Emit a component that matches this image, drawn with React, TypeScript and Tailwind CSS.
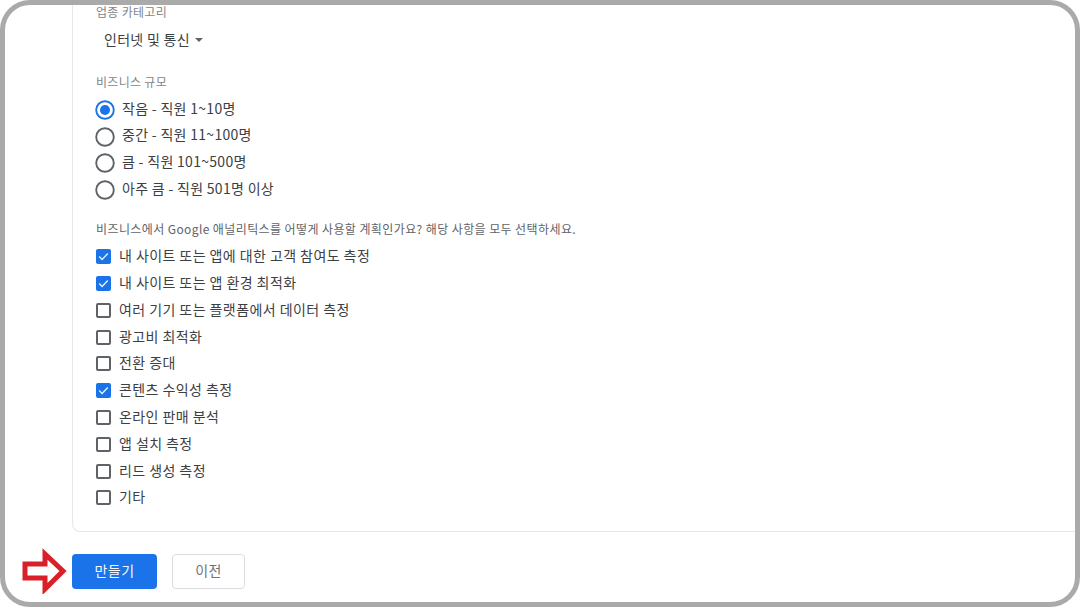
const font = { fontFamily: '"Noto Sans CJK KR", Roboto, sans-serif' };

const sizes = [
  "작음 - 직원 1~10명",
  "중간 - 직원 11~100명",
  "큼 - 직원 101~500명",
  "아주 큼 - 직원 501명 이상",
];

const goals = [
  { label: "내 사이트 또는 앱에 대한 고객 참여도 측정", checked: true },
  { label: "내 사이트 또는 앱 환경 최적화", checked: true },
  { label: "여러 기기 또는 플랫폼에서 데이터 측정", checked: false },
  { label: "광고비 최적화", checked: false },
  { label: "전환 증대", checked: false },
  { label: "콘텐츠 수익성 측정", checked: true },
  { label: "온라인 판매 분석", checked: false },
  { label: "앱 설치 측정", checked: false },
  { label: "리드 생성 측정", checked: false },
  { label: "기타", checked: false },
];

function Radio({ on }: { on: boolean }) {
  return (
    <svg width="20" height="20" viewBox="0 0 20 20" className="shrink-0">
      <circle cx="10" cy="10" r="8.8" fill="none" stroke={on ? "#1a73e8" : "#5f6368"} strokeWidth="1.9" />
      {on && <circle cx="10" cy="10" r="5" fill="#1a73e8" />}
    </svg>
  );
}

function Check({ on }: { on: boolean }) {
  if (!on) {
    return <div className="w-[15px] h-[15px] shrink-0 rounded-[2px] border-2 border-[#5f6368]" />;
  }
  return (
    <svg width="15" height="15" viewBox="0 0 15 15" className="shrink-0">
      <rect width="15" height="15" rx="2" fill="#1a73e8" />
      <path d="M3.2 7.6 L6.1 10.5 L11.8 4.6" fill="none" stroke="#e8f1fd" strokeWidth="1.4" />
    </svg>
  );
}

export default function App() {
  return (
    <div className="w-[1080px] h-[607px] bg-white" style={font}>
      <div className="relative w-full h-full border-[5px] border-[#aaaaaa] rounded-[30px] overflow-hidden flex flex-col">
        <div className="ml-[67px] h-[527px] shrink-0 border-l border-b border-[#e6e7e9] rounded-bl-lg pl-[23px]">
          <div className="mt-[-1px] text-[12px] leading-[16px] tracking-[.3px] text-[#80868b]">업종 카테고리</div>
          <div className="mt-[7px] pl-[8px] h-[24px] flex items-center gap-[5px] text-[14px] tracking-[.3px] text-[#3c4043]">
            인터넷 및 통신
            <span className="w-0 h-0 border-x-[4px] border-x-transparent border-t-[4px] border-t-[#5f6368] mt-[2px]" />
          </div>
          <div className="mt-[23px] text-[12px] leading-[16px] tracking-[.3px] text-[#80868b]">비즈니스 규모</div>
          <div className="mt-[7px] flex flex-col">
            {sizes.map((s, i) => (
              <div key={s} className="h-[26.6px] flex items-center gap-[7px] -ml-[1px] text-[14px] tracking-[.3px] text-[#3c4043]">
                <Radio on={i === 0} />
                <span className="-mt-[4px]">{s}</span>
              </div>
            ))}
          </div>
          <div className="mt-[18px] text-[12px] leading-[16px] tracking-[.4px] text-[#5f6368]">
            비즈니스에서 Google 애널리틱스를 어떻게 사용할 계획인가요? 해당 사항을 모두 선택하세요.
          </div>
          <div className="mt-[6px] flex flex-col">
            {goals.map((g) => (
              <div key={g.label} className="h-[26.8px] flex items-center gap-[8px] text-[14px] tracking-[.43px] text-[#3c4043]">
                <Check on={g.checked} />
                <span className="-mt-[2px]">{g.label}</span>
              </div>
            ))}
          </div>
        </div>
        <div className="ml-[67px] mt-[22px] flex gap-[15px]">
          <button className="w-[85px] h-[35px] pb-[3px] rounded-[4px] bg-[#1a73e8] text-[#f4f8fe] text-[14px] tracking-[.5px]">만들기</button>
          <button className="w-[73px] h-[35px] pb-[3px] rounded-[4px] bg-white border border-[#dadce0] text-[#6f7478] text-[14px] tracking-[.3px]">이전</button>
        </div>
        <svg width="48" height="46" viewBox="0 0 48 46" className="absolute left-[16px] top-[543px]">
          <path d="M4 16 H24 V6 L42 23 L24 41 V30 H4 Z" fill="#fff" stroke="#d9202a" strokeWidth="5" />
        </svg>
      </div>
    </div>
  );
}
